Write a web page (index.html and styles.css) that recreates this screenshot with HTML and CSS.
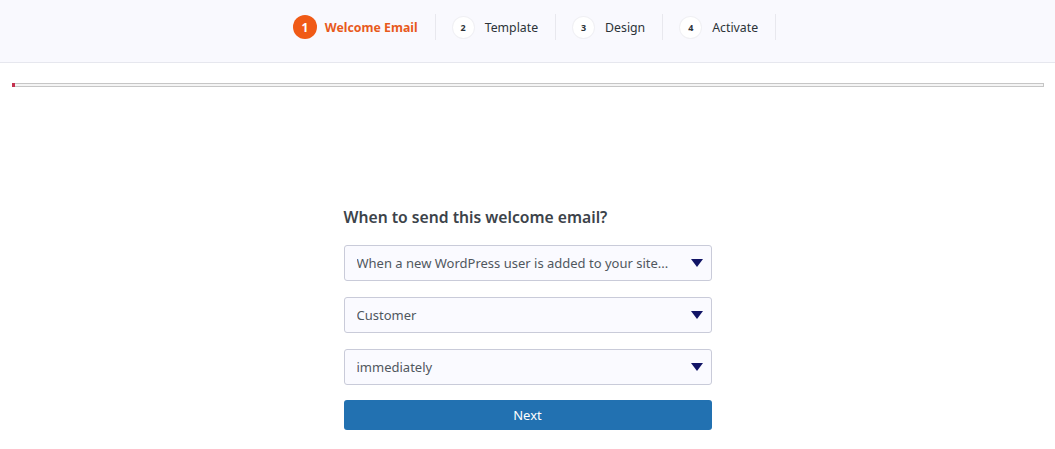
FILE: index.html
```html
<!DOCTYPE html>
<html lang="en">
<head>
    <meta charset="UTF-8">
    <meta name="viewport" content="width=device-width, initial-scale=1.0">
    <title>Welcome Email</title>
    <link rel="stylesheet" href="styles.css">
</head>
<body>

<div class="steps-bar">
    <div class="steps">
        <div class="step active"><span class="num">1</span><span class="label">Welcome Email</span></div>
        <div class="step"><span class="num">2</span><span class="label">Template</span></div>
        <div class="step"><span class="num">3</span><span class="label">Design</span></div>
        <div class="step"><span class="num">4</span><span class="label">Activate</span></div>
    </div>
</div>

<div class="progress"><div class="progress-fill" style="width: 3px"></div></div>

<div class="wizard">
    <h3>When to send this welcome email?</h3>

    <div class="select-wrap">
        <select>
            <option>When a new WordPress user is added to your site...</option>
        </select>
        <svg class="caret" width="12" height="8" viewBox="0 0 12 8"><path d="M0 0h12L6 8z" fill="#111466"/></svg>
    </div>

    <div class="select-wrap">
        <select>
            <option>Customer</option>
        </select>
        <svg class="caret" width="12" height="8" viewBox="0 0 12 8"><path d="M0 0h12L6 8z" fill="#111466"/></svg>
    </div>

    <div class="select-wrap">
        <select>
            <option>immediately</option>
        </select>
        <svg class="caret" width="12" height="8" viewBox="0 0 12 8"><path d="M0 0h12L6 8z" fill="#111466"/></svg>
    </div>

    <button class="next-btn">Next</button>
</div>

</body>
</html>
```

FILE: styles.css
```css
body {
    font-family: "Noto Sans", "Open Sans", sans-serif;
    background-color: #fff;
    margin: 0;
    padding: 0;
    color: #3c434a;
}
.steps-bar {
    height: 54px;
    padding-bottom: 8px;
    background-color: #f9f9fe;
    border-bottom: 1px solid #e6e7ee;
    display: flex;
    justify-content: center;
    align-items: center;
}
.steps {
    display: flex;
    align-items: center;
    margin-left: -3px;
}
.step {
    display: flex;
    align-items: center;
    gap: 9px;
    padding: 0 17px;
    height: 26px;
    border-right: 1px solid #e8e8ee;
    font-size: 12.3px;
    color: #2c3338;
}
.step .num {
    width: 21px;
    height: 21px;
    border-radius: 50%;
    background-color: #fff;
    box-shadow: 0 0 0 1px #f0f0f4;
    display: flex;
    justify-content: center;
    align-items: center;
    font-size: 9px;
    font-weight: bold;
    margin-right: 2px;
}
.step.active {
    gap: 8px;
}
.step.active .num {
    width: 24px;
    height: 24px;
    background-color: #f05a16;
    box-shadow: none;
    color: #fff;
    font-size: 12px;
    margin-right: 0;
}
.step.active .label {
    color: #e85a1c;
    font-weight: bold;
}
.progress {
    margin: 20px 11px 0 12px;
    height: 2px;
    border: 1px solid #c6c6c6;
    background-color: #f4f4f4;
}
.progress-fill {
    height: 4px;
    margin: -1px 0 0 -1px;
    background-color: #c4314f;
}
.wizard {
    width: 368px;
    margin: 119px auto 0;
}
h3 {
    font-size: 15.7px;
    font-weight: 600;
    color: #3c434a;
    margin: 0 0 17px;
}
.select-wrap {
    position: relative;
    margin-bottom: 16px;
}
.select-wrap:last-of-type {
    margin-bottom: 15px;
}
select {
    width: 100%;
    height: 36px;
    padding: 0 30px 0 12px;
    border: 1px solid #c9cbd9;
    border-radius: 3px;
    background-color: #fafaff;
    font-family: inherit;
    font-size: 13px;
    color: #50575e;
    appearance: none;
    -webkit-appearance: none;
}
.caret {
    position: absolute;
    right: 9px;
    top: 14px;
    pointer-events: none;
}
.next-btn {
    width: 100%;
    height: 30px;
    border: none;
    border-radius: 3px;
    background-color: #2271b1;
    color: #fff;
    font-family: inherit;
    font-size: 13px;
    cursor: pointer;
}
```
